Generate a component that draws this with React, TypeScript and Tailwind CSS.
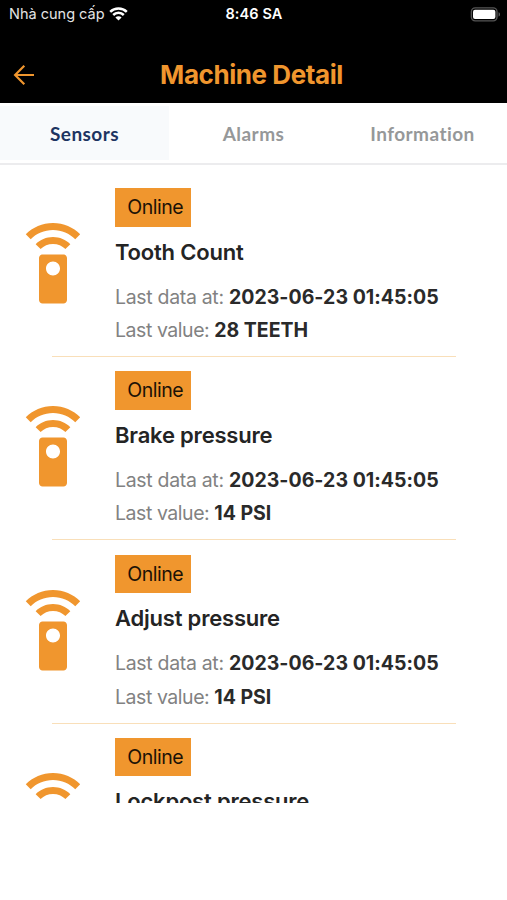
import { FC } from "react";

type Sensor = {
  name: string;
  lastDataAt?: string;
  lastValue?: string;
};

const sensors: Sensor[] = [
  { name: "Tooth Count", lastDataAt: "2023-06-23 01:45:05", lastValue: "28 TEETH" },
  { name: "Brake pressure", lastDataAt: "2023-06-23 01:45:05", lastValue: "14 PSI" },
  { name: "Adjust pressure", lastDataAt: "2023-06-23 01:45:05", lastValue: "14 PSI" },
  { name: "Lockpost pressure" },
];

const WifiIcon: FC = () => (
  <svg width="19" height="14" viewBox="0 0 19 14" fill="none" stroke="white" strokeWidth="2.5">
    <path d="M1.2 4.9a11.8 11.8 0 0 1 16.6 0" />
    <path d="M4.2 8a7.5 7.5 0 0 1 10.6 0" />
    <path d="M9.5 13.6 6.4 10.5a4.4 4.4 0 0 1 6.2 0Z" fill="white" stroke="none" />
  </svg>
);

const BatteryIcon: FC = () => (
  <svg width="31" height="15" viewBox="0 0 31 15">
    <rect x="1.4" y="0.9" width="25.6" height="13" rx="3.8" fill="none" stroke="#555" strokeWidth="1.4" />
    <rect x="3" y="2.8" width="22.4" height="9.2" rx="2" fill="white" />
    <path d="M28.6 5.2c1.7.6 1.7 3.8 0 4.4Z" fill="#6b6b6b" />
  </svg>
);

const BackIcon: FC = () => (
  <svg width="22" height="22" viewBox="0 0 22 22" fill="none" stroke="#f0962e" strokeWidth="2.2">
    <path d="M21 11H2.4M11.3 1.7 2.1 11l9.2 9.3" />
  </svg>
);

const RemoteIcon: FC = () => (
  <svg className="size-[84px] shrink-0" viewBox="0 0 24 24" fill="#f0962e">
    <path d="M15 9H9c-.55 0-1 .45-1 1v12c0 .55.45 1 1 1h6c.55 0 1-.45 1-1V10c0-.55-.45-1-1-1zm-3 6c-1.1 0-2-.9-2-2s.9-2 2-2 2 .9 2 2-.9 2-2 2zM7.05 6.05l1.41 1.41C9.37 6.56 10.62 6 12 6s2.63.56 3.54 1.46l1.41-1.41C15.68 4.78 13.93 4 12 4s-3.68.78-4.95 2.05zM12 0C8.96 0 6.21 1.23 4.22 3.22l1.41 1.41C7.26 3.01 9.51 2 12 2s4.74 1.01 6.36 2.64l1.41-1.41C17.79 1.23 15.04 0 12 0z" />
  </svg>
);

const StatusBar: FC = () => (
  <div className="grid h-7 grid-cols-3 items-center pr-[6px] pl-[7px] text-white">
    <div className="flex items-center gap-1 pl-0.5 text-[14.5px] whitespace-nowrap text-[#e4e4e4]">
      Nhà cung cấp
      <WifiIcon />
    </div>
    <div className="text-center text-[14.5px] font-semibold tracking-[0.1px]">8:46 SA</div>
    <div className="flex justify-end">
      <BatteryIcon />
    </div>
  </div>
);

const SensorRow: FC<{ sensor: Sensor }> = ({ sensor }) => (
  <div className="h-[183.3px] shrink-0">
    <div className="flex h-[182px] pl-[11px]">
      <div className="pt-[49px]">
        <RemoteIcon />
      </div>
      <div className="flex flex-col items-start pt-[14px] pl-[19.5px] whitespace-nowrap">
        <div className="flex h-[38.5px] w-[76.5px] items-center justify-center bg-[#f0962e] pt-px pl-[5px] text-[19.5px] tracking-[-0.5px] text-[#1c1206]">
          Online
        </div>
        <div className="mt-[9px] pl-[0.5px] text-[22px] leading-8 font-semibold tracking-[-0.2px] text-[#242424]">
          {sensor.name}
        </div>
        {sensor.lastDataAt && (
          <div className="mt-[13px] pl-[0.5px] text-[19.5px] leading-[33.4px] text-[#828282]">
            <div className="tracking-[-0.32px]">
              Last data at: <span className="font-bold tracking-[0.03px] text-[#2a2a2a]">{sensor.lastDataAt}</span>
            </div>
            <div className="tracking-[-0.45px]">
              Last value: <span className="font-bold tracking-[-0.02px] text-[#2a2a2a]">{sensor.lastValue}</span>
            </div>
          </div>
        )}
      </div>
    </div>
    <div className="mr-[51px] ml-[52px] h-px bg-[#f9dfb9]" />
  </div>
);

export default function App() {
  return (
    <div className="h-[900px] w-[507px] overflow-hidden bg-white font-['Inter','Noto_Sans',sans-serif]">
      <header className="h-[103px] bg-black">
        <StatusBar />
        <div className="grid h-[75px] grid-cols-[80px_1fr_80px] items-center pt-[18px]">
          <div className="pl-[13px]">
            <BackIcon />
          </div>
          <h1 className="pr-1 text-center text-[26px] font-bold tracking-[-0.43px] text-[#f0962e]">Machine Detail</h1>
        </div>
      </header>
      <nav className="grid h-[62px] grid-cols-3 border-b-2 border-[#ececee] pt-[3px] pb-[3px] text-center font-['Lato',sans-serif] text-[19px] font-bold tracking-[0.45px] text-[#969899]">
        <div className="flex items-center justify-center bg-[#f8fafc] pt-0.5 text-[#1d3461]">Sensors</div>
        <div className="flex items-center justify-center pt-0.5">Alarms</div>
        <div className="flex items-center justify-center pt-0.5">Information</div>
      </nav>
      <main className="flex h-[638px] flex-col overflow-hidden pt-[9px]">
        {sensors.map((sensor) => (
          <SensorRow key={sensor.name} sensor={sensor} />
        ))}
      </main>
    </div>
  );
}
